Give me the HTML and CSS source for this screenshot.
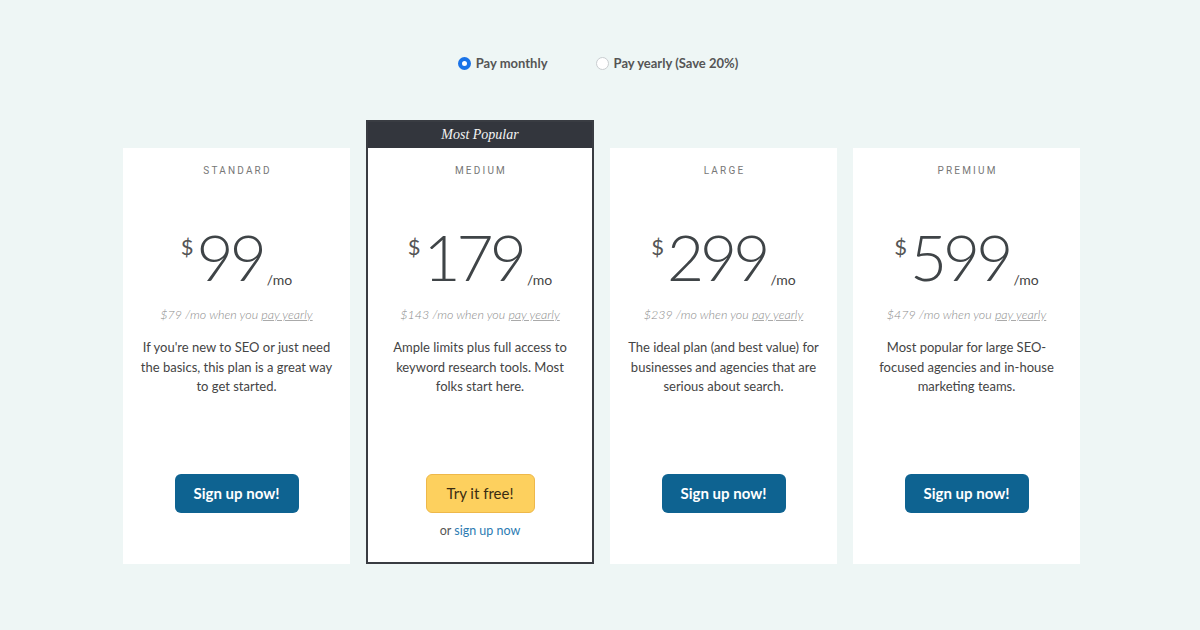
FILE: index.html
```html
<!DOCTYPE html>
<html>
<head>
<meta charset="utf-8">
<link rel="stylesheet" href="styles.css">
</head>
<body>
<div class="page">
  <div class="toggle">
    <label class="opt"><span class="radio on"></span>Pay monthly</label>
    <label class="opt"><span class="radio"></span>Pay yearly (Save 20%)</label>
  </div>
  <div class="plans">
    <div class="card">
      <div class="tier">STANDARD</div>
      <div class="price"><span class="cur">$</span><span class="amt">99</span><span class="per">/mo</span></div>
      <div class="yearly">$79 /mo when you <u>pay yearly</u></div>
      <p class="desc">If you're new to SEO or just need the basics, this plan is a great way to get started.</p>
      <a class="btn">Sign up now!</a>
    </div>
    <div class="featured">
      <div class="badge">Most Popular</div>
      <div class="card inner">
        <div class="tier">MEDIUM</div>
        <div class="price"><span class="cur">$</span><span class="amt">179</span><span class="per">/mo</span></div>
        <div class="yearly">$143 /mo when you <u>pay yearly</u></div>
        <p class="desc">Ample limits plus full access to keyword research tools. Most folks start here.</p>
        <a class="btn try">Try it free!</a>
        <div class="alt">or <a>sign up now</a></div>
      </div>
    </div>
    <div class="card">
      <div class="tier">LARGE</div>
      <div class="price"><span class="cur">$</span><span class="amt">299</span><span class="per">/mo</span></div>
      <div class="yearly">$239 /mo when you <u>pay yearly</u></div>
      <p class="desc">The ideal plan (and best value) for businesses and agencies that are serious about search.</p>
      <a class="btn">Sign up now!</a>
    </div>
    <div class="card">
      <div class="tier">PREMIUM</div>
      <div class="price"><span class="cur">$</span><span class="amt">599</span><span class="per">/mo</span></div>
      <div class="yearly">$479 /mo when you <u>pay yearly</u></div>
      <p class="desc">Most popular for large SEO-focused agencies and in-house marketing teams.</p>
      <a class="btn">Sign up now!</a>
    </div>
  </div>
</div>
</body>
</html>
```
FILE: styles.css
```css
html, body {
  margin: 0;
  padding: 0;
}
body {
  background: #eef6f5;
  font-family: Lato, "Liberation Sans", sans-serif;
  color: #444;
  width: 1200px;
  height: 630px;
  overflow: hidden;
}
.page {
  padding-top: 53px;
}
.toggle {
  display: flex;
  justify-content: center;
  gap: 48px;
  padding-right: 4px;
  height: 20px;
  align-items: center;
}
.opt {
  display: flex;
  align-items: center;
  font-size: 13px;
  font-weight: 700;
  color: #555;
}
.radio {
  width: 11px;
  height: 11px;
  border: 1px solid #c9cdd0;
  border-radius: 50%;
  background: #fff;
  margin-right: 5px;
  box-sizing: content-box;
}
.radio.on {
  width: 5px;
  height: 5px;
  border: 4px solid #1a73e8;
}
.plans {
  margin-top: 47px;
  display: flex;
  justify-content: center;
  align-items: flex-end;
  gap: 16px;
  padding-left: 3px;
}
.card {
  width: 227px;
  height: 416px;
  background: #fff;
  box-sizing: border-box;
  padding-top: 16px;
  text-align: center;
  display: flex;
  flex-direction: column;
  align-items: center;
}
.featured {
  width: 228px;
  border: 2px solid #393c42;
  box-sizing: border-box;
  background: #fff;
}
.badge {
  background: #33363d;
  color: #f4f4f4;
  font-family: "Liberation Serif", serif;
  font-style: italic;
  font-size: 14px;
  height: 26px;
  line-height: 25px;
  text-align: center;
}
.card.inner {
  width: 224px;
  height: 414px;
}
.tier {
  font-family: Roboto, sans-serif;
  font-size: 10px;
  letter-spacing: 2.2px;
  line-height: 14px;
  color: #777;
  padding-left: 2px;
}
.price {
  margin-top: 47px;
  display: flex;
  align-items: flex-start;
  color: #3f4447;
  font-weight: 300;
}
.cur {
  font-size: 22px;
  line-height: 22px;
  margin-top: 11px;
  margin-right: 3px;
  font-weight: 400;
  color: #555;
}
.amt {
  font-size: 64px;
  line-height: 64px;
  letter-spacing: -4px;
  margin-right: 4px;
}
.per {
  font-size: 14px;
  line-height: 14px;
  margin-top: 48px;
  font-weight: 400;
  color: #444;
}
.yearly {
  margin-top: 17px;
  font-size: 12.5px;
  font-style: italic;
  font-weight: 300;
  color: #8c8c8c;
  line-height: 18px;
}
.yearly u {
  text-decoration-color: #aaa;
}
.desc {
  margin: 14px 0 0;
  padding: 0 16px;
  font-size: 13px;
  line-height: 19.5px;
  color: #444;
  height: 136px;
}
.btn {
  display: block;
  width: 124px;
  height: 39px;
  box-sizing: border-box;
  background: #0e6391;
  color: #fff;
  font-weight: 700;
  font-size: 15px;
  line-height: 39px;
  border-radius: 6px;
}
.btn.try {
  width: 109px;
  background: #fdd05e;
  border: 1px solid #eeb84a;
  color: #3a2c12;
  font-weight: 400;
  line-height: 37px;
}
.alt {
  margin-top: 10px;
  font-size: 12.5px;
  color: #555;
}
.alt a {
  color: #2c7bb2;
}
```
